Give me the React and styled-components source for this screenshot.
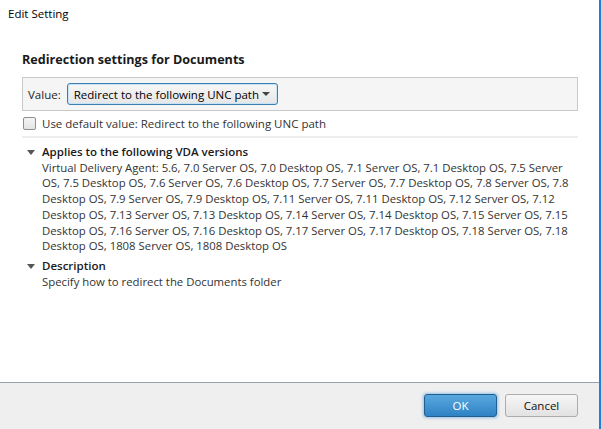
import React from "react";
import styled, { createGlobalStyle } from "styled-components";

const Global = createGlobalStyle`
  html, body { margin: 0; padding: 0; background: #ffffff; }
  body { font-family: "Open Sans", "Noto Sans", sans-serif; color: #1e1e1e; }
  * { box-sizing: border-box; }
`;

const Window = styled.div`
  width: 601px;
  height: 429px;
  display: flex;
  flex-direction: column;
  background: #ffffff;
  border-right: 2px solid #1a82d8;
  overflow: hidden;
`;

const Title = styled.div`
  height: 30px;
  padding: 6px 0 0 8px;
  font-size: 11.5px;
  color: #000;
`;

const Content = styled.div`
  flex: 1;
  padding: 15px 21px 0 22px;
  display: flex;
  flex-direction: column;
`;

const Heading = styled.div`
  font-size: 12.6px;
  font-weight: 700;
  color: #1a1a1a;
  height: 32px;
  padding-top: 6px;
`;

const ValueBox = styled.div`
  height: 34px;
  border: 1px solid #c9c9c9;
  background: #f5f5f5;
  display: flex;
  align-items: center;
  padding: 0 0 0 5px;
  gap: 6px;
  font-size: 11.5px;
`;

const Select = styled.div`
  width: 211px;
  height: 22px;
  border: 1px solid #3c7fb1;
  border-radius: 3px;
  box-shadow: inset 0 0 0 1px #c6e2f7;
  background: linear-gradient(#f7f7f7, #e6e6e6);
  display: flex;
  align-items: center;
  justify-content: space-between;
  padding: 0 7px 0 6px;
  font-size: 11.5px;
  color: #000;
`;

const Caret = styled.span`
  width: 0;
  height: 0;
  border-left: 4px solid transparent;
  border-right: 4px solid transparent;
  border-top: 4px solid #444;
`;

const CheckRow = styled.label`
  display: flex;
  align-items: center;
  gap: 6px;
  height: 25px;
  padding-left: 1px;
  font-size: 11.5px;
  color: #333;
`;

const Box = styled.span`
  width: 13px;
  height: 13px;
  border: 1px solid #8f8f8f;
  border-radius: 2px;
  background: linear-gradient(#f4f4f4, #e4e4e4);
`;

const Divider = styled.div`
  height: 2px;
  background: #eeeeee;
  margin-bottom: 6px;
`;

const Section = styled.div`
  display: grid;
  grid-template-columns: 20px 1fr;
  margin-bottom: 4px;
  font-size: 11.5px;
  line-height: 15.7px;
`;

const Tri = styled.span`
  margin: 6px 0 0 5px;
  width: 0;
  height: 0;
  border-left: 4px solid transparent;
  border-right: 4px solid transparent;
  border-top: 5px solid #555;
`;

const SectionTitle = styled.div`
  font-weight: 600;
  color: #1a1a1a;
`;

const SectionText = styled.div`
  grid-column: 2;
  color: #333;
  font-size: 11.35px;
`;

const Line = styled.div`
  white-space: nowrap;
`;

const Footer = styled.div`
  height: 47px;
  border-top: 1px solid #95a3b1;
  background: #efefef;
  display: flex;
  justify-content: flex-end;
  align-items: flex-start;
  padding: 11px 21px 0 0;
  gap: 8px;
`;

const Button = styled.button`
  width: 73px;
  height: 23px;
  border-radius: 3px;
  font-family: inherit;
  font-size: 11.5px;
  padding: 0;
  cursor: pointer;
  border: 1px solid ${(p) => (p.$primary ? "#1f5f91" : "#acacac")};
  color: ${(p) => (p.$primary ? "#ffffff" : "#111")};
  background: ${(p) =>
    p.$primary
      ? "linear-gradient(#5aa8df, #2f82c4)"
      : "linear-gradient(#f6f6f6, #e2e2e2)"};
  box-shadow: ${(p) =>
    p.$primary ? "0 0 3px 1px rgba(90,160,220,0.6)" : "none"};
`;

const versionLines = [
  "Virtual Delivery Agent: 5.6, 7.0 Server OS, 7.0 Desktop OS, 7.1 Server OS, 7.1 Desktop OS, 7.5 Server",
  "OS, 7.5 Desktop OS, 7.6 Server OS, 7.6 Desktop OS, 7.7 Server OS, 7.7 Desktop OS, 7.8 Server OS, 7.8",
  "Desktop OS, 7.9 Server OS, 7.9 Desktop OS, 7.11 Server OS, 7.11 Desktop OS, 7.12 Server OS, 7.12",
  "Desktop OS, 7.13 Server OS, 7.13 Desktop OS, 7.14 Server OS, 7.14 Desktop OS, 7.15 Server OS, 7.15",
  "Desktop OS, 7.16 Server OS, 7.16 Desktop OS, 7.17 Server OS, 7.17 Desktop OS, 7.18 Server OS, 7.18",
  "Desktop OS, 1808 Server OS, 1808 Desktop OS",
];

export default function App() {
  return (
    <>
      <Global />
      <Window>
        <Title>Edit Setting</Title>
        <Content>
          <Heading>Redirection settings for Documents</Heading>
          <ValueBox>
            <span>Value:</span>
            <Select>
              <span>Redirect to the following UNC path</span>
              <Caret />
            </Select>
          </ValueBox>
          <CheckRow>
            <Box />
            <span>Use default value: Redirect to the following UNC path</span>
          </CheckRow>
          <Divider />
          <Section>
            <Tri />
            <SectionTitle>Applies to the following VDA versions</SectionTitle>
            <SectionText>
              {versionLines.map((l) => (
                <Line key={l}>{l}</Line>
              ))}
            </SectionText>
          </Section>
          <Section>
            <Tri />
            <SectionTitle>Description</SectionTitle>
            <SectionText>Specify how to redirect the Documents folder</SectionText>
          </Section>
        </Content>
        <Footer>
          <Button $primary>OK</Button>
          <Button>Cancel</Button>
        </Footer>
      </Window>
    </>
  );
}
